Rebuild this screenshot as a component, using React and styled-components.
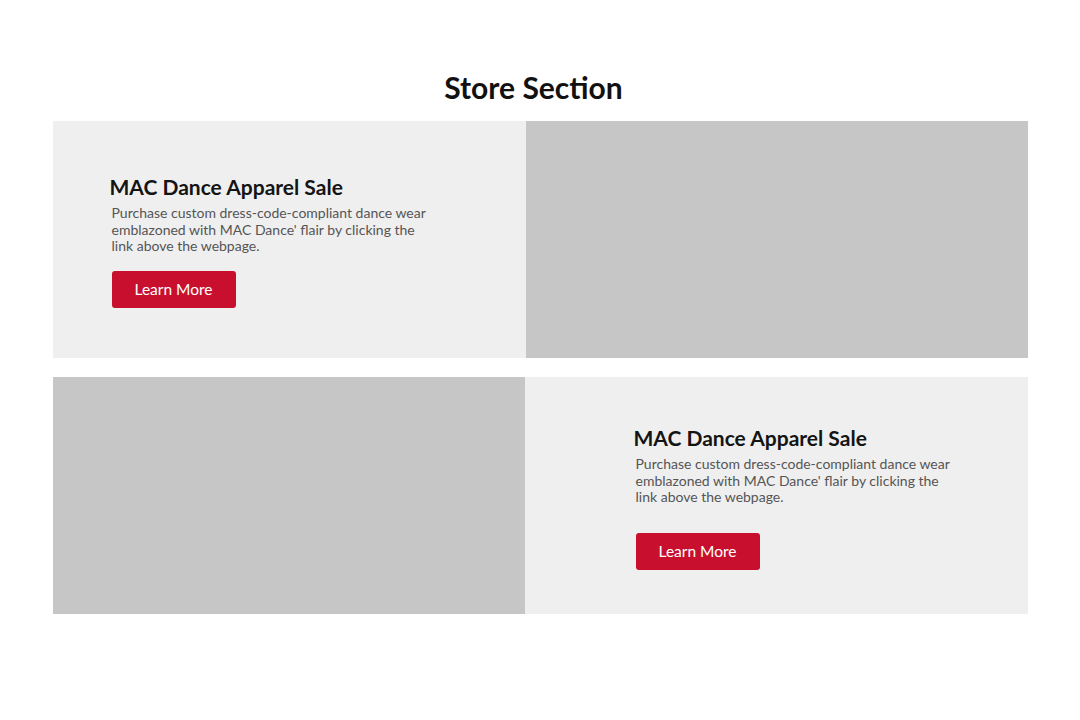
import React from "react";
import styled, { createGlobalStyle } from "styled-components";

const GlobalStyle = createGlobalStyle`
  body {
    margin: 0;
    background: #ffffff;
    font-family: Lato, "Open Sans", Arial, sans-serif;
  }
`;

const storeItems = [
  {
    id: 1,
    title: "MAC Dance Apparel Sale",
    description:
      "Purchase custom dress-code-compliant dance wear emblazoned with MAC Dance' flair by clicking the link above the webpage.",
    imageFirst: false,
    padTop: 54,
    padLeft: 57,
    buttonGap: 16,
  },
  {
    id: 2,
    title: "MAC Dance Apparel Sale",
    description:
      "Purchase custom dress-code-compliant dance wear emblazoned with MAC Dance' flair by clicking the link above the webpage.",
    imageFirst: true,
    padTop: 49,
    padLeft: 109,
    buttonGap: 27,
  },
];

const StoreSection = () => {
  return (
    <StoreSectionStyled>
      <GlobalStyle />
      <h2 className='section-title'>Store Section</h2>
      <div className='card-list'>
        {storeItems.map((item) => (
          <StoreCard key={item.id} $imageFirst={item.imageFirst}>
            {item.imageFirst && <ImagePlaceholder />}
            <CardContent $padTop={item.padTop} $padLeft={item.padLeft}>
              <CardTitle>{item.title}</CardTitle>
              <CardDescription>{item.description}</CardDescription>
              <LearnButton $gap={item.buttonGap}>Learn More</LearnButton>
            </CardContent>
            {!item.imageFirst && <ImagePlaceholder />}
          </StoreCard>
        ))}
      </div>
    </StoreSectionStyled>
  );
};

const StoreSectionStyled = styled.section`
  max-width: 975px;
  margin: 0 auto;
  padding-top: 70px;

  .section-title {
    margin: 0 0 16px;
    padding-right: 13px;
    text-align: center;
    font-size: 30px;
    line-height: 35px;
    font-weight: 700;
    color: #111111;
  }

  .card-list {
    display: flex;
    flex-direction: column;
    gap: 19px;
  }
`;

const StoreCard = styled.div`
  display: grid;
  grid-template-columns: ${(p) => (p.$imageFirst ? "472px 1fr" : "473px 1fr")};
  height: 237px;
  background: #efefef;
`;

const ImagePlaceholder = styled.div`
  background: #c6c6c6;
`;

const CardContent = styled.div`
  display: flex;
  flex-direction: column;
  align-items: flex-start;
  padding-top: ${(p) => p.$padTop}px;
  padding-left: ${(p) => p.$padLeft}px;
`;

const CardTitle = styled.h3`
  margin: 0;
  font-size: 21px;
  line-height: 24px;
  font-weight: 700;
  color: #141414;
`;

const CardDescription = styled.p`
  margin: 6px 0 0 2px;
  width: 320px;
  font-size: 14px;
  line-height: 16.5px;
  color: #555555;
`;

const LearnButton = styled.button`
  margin: ${(p) => p.$gap}px 0 0 2px;
  width: 124px;
  height: 37px;
  border: none;
  border-radius: 3px;
  background: #c8102e;
  color: #ffffff;
  font-family: Lato, "Open Sans", Arial, sans-serif;
  font-size: 15.5px;
  cursor: pointer;
`;

export default StoreSection;
